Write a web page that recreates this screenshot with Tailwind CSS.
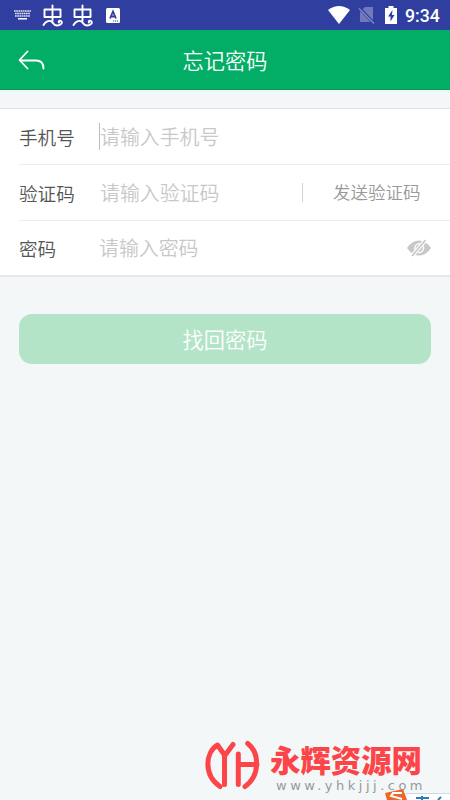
<!DOCTYPE html>
<html lang="zh-CN">
<head>
<meta charset="utf-8">
<title>忘记密码</title>
<script src="https://cdn.jsdelivr.net/npm/@tailwindcss/browser@4"></script>
</head>
<body class="bg-[#f3f7f8] font-['Noto_Sans_CJK_SC',sans-serif] font-[350]">
<div class="relative flex h-[800px] w-[450px] flex-col overflow-hidden">
  <!-- status bar -->
  <div class="flex h-[30px] shrink-0 items-center bg-[#303f9f] pl-[14px] pr-[10px] text-white">
    <svg class="h-[10px] w-[17px]" viewBox="0 0 17 10" stroke="#fff" fill="none"><path d="M0 1h17M1 3.500h15M1 6h15" stroke-width="1.4" stroke-dasharray="1.7 .5" opacity=".85"/><path d="M4 8.800h9" stroke-width="1.5"/></svg>
    <svg class="ml-[11px] h-[23px] w-[21px]" viewBox="0 0 21 23" fill="none" stroke="#fff" stroke-width="1.9" stroke-linecap="round" stroke-linejoin="round"><path d="M10.500 1.500V17M2.500 5.500h16v7.500h-16zM1.500 21C3.500 17.500 7 16 9.500 17.500C11 18.500 11.500 21.500 15 21.500C18.500 21.500 20.500 19 19.500 17.500C18.500 16 16 16.500 17 18.500"/></svg>
    <svg class="ml-[9px] h-[23px] w-[21px]" viewBox="0 0 21 23" fill="none" stroke="#fff" stroke-width="1.9" stroke-linecap="round" stroke-linejoin="round"><path d="M10.500 1.500V17M2.500 5.500h16v7.500h-16zM1.500 21C3.500 17.500 7 16 9.500 17.500C11 18.500 11.500 21.500 15 21.500C18.500 21.500 20.500 19 19.500 17.500C18.500 16 16 16.500 17 18.500"/></svg>
    <svg class="ml-[13px] h-[15px] w-[14px]" viewBox="0 0 14 15"><rect width="14" height="15" rx="1.5" fill="#fff"/><path d="M4 10.500L7 3.500l3 7M5 8.500h4" fill="none" stroke="#303f9f" stroke-width="1.8"/><path d="M7 13h1.200m.8 0h1.200m.8 0h1.200" stroke="#303f9f" stroke-width="1.200"/></svg>
    <svg class="ml-auto h-[18px] w-[22px]" viewBox="0 0 22 18"><path d="M0 4Q11-4 22 4L11 18z" fill="#fff"/></svg>
    <svg class="ml-[8px] h-[18px] w-[17px]" viewBox="0 0 17 18"><path d="M7 1h8v15H2V6z" fill="#6f79bb"/><path d="M1 1.500l15 16" stroke="#303f9f" stroke-width="3"/><path d="M1 2.500l15 15" stroke="#7f88c3" stroke-width="1.4"/></svg>
    <svg class="ml-[10px] h-[18px] w-[12px]" viewBox="0 0 12 18"><path d="M3.500 0h5v2H12v16H0V2h3.500z" fill="#fff"/><path d="M7.500 4L3 10.500h2.500V15.500L9.500 9H7z" fill="#303f9f"/></svg>
    <span class="ml-[8px] w-[35px] whitespace-nowrap pt-[2px] font-[Roboto] text-[17.700px] font-medium leading-[28px]">9:34</span>
  </div>
  <header class="relative flex h-[60px] shrink-0 items-center justify-center border-b border-[#049b56] bg-[#02ae66] text-white">
    <svg class="absolute left-[18px] top-[20px] h-[21px] w-[27px]" viewBox="0 0 27 21" fill="none" stroke="#fff" stroke-width="1.8" stroke-linecap="round" stroke-linejoin="round"><path d="M9.500 1.500L1.500 10L9.500 18.500M2 10.500h16c5 0 7.500 3 7.500 8"/></svg>
    <h1 class="text-[21.200px] font-[350] leading-[30px]">忘记密码</h1>
  </header>
  <main class="mt-[18px] flex flex-col">
    <div class="flex h-[169px] flex-col border-t border-b-2 border-t-[#dfe2e3] border-b-[#e5e7e8] bg-white text-[#555]">
      <label class="ml-[19px] flex h-[56px] items-center border-b border-[#ececec]">
        <span class="w-[80px] text-[18.600px]">手机号</span>
        <span class="h-[27px] w-px bg-[#bbb]"></span>
        <span class="text-[19.900px] text-[#c8c8c8]">请输入手机号</span>
      </label>
      <label class="ml-[19px] flex h-[56px] items-center border-b border-[#ececec]">
        <span class="w-[81px] text-[18.600px]">验证码</span>
        <span class="w-[202px] text-[19.900px] text-[#c8c8c8]">请输入验证码</span>
        <span class="h-[19px] w-px bg-[#d2d2d2]"></span>
        <span class="ml-[30px] text-[17.500px] text-[#999]">发送验证码</span>
      </label>
      <label class="ml-[19px] flex h-[54px] items-center pr-[18px]">
        <span class="w-[80px] text-[18.600px]">密码</span>
        <span class="text-[19.900px] text-[#c8c8c8]">请输入密码</span>
        <svg class="ml-auto h-[18px] w-[26px]" viewBox="0 0 26 18"><path d="M1 9Q6 1.500 13 1.500T25 9Q20 16.500 13 16.500T1 9z" fill="#c8c8c8"/><path d="M9.500 12A4.700 4.700 0 0 1 14 4.700M17 6.500A4.700 4.700 0 0 1 12 13.500" fill="none" stroke="#fff" stroke-width="1.200"/><path d="M6 17L19.500 1" stroke="#fff" stroke-width="4"/><path d="M6 17L19.500 1" stroke="#c8c8c8" stroke-width="1.700"/></svg>
      </label>
    </div>
    <button class="mx-[19px] mt-[37px] h-[50px] rounded-[13px] bg-[#b3e4c7] pb-px text-[21.200px] font-[350] text-white">找回密码</button>
  </main>
  <!-- site mark -->
  <footer class="absolute bottom-0 left-[204px] flex h-[62px] w-[246px]">
    <svg class="h-[52px] w-[57px] shrink-0" viewBox="0 0 57 52" fill="none" stroke="#fc4548" stroke-width="5" stroke-linecap="round" stroke-linejoin="round"><path d="M20.500 17L13.500 7C1.500 14-1 37 16 48.500M20.500 18L29 6.500M20.500 18v28.500M34.300 16v30.500M35 26.500h18M43.700 5.500C56 15 56 38 41 48.500"/></svg>
    <div class="ml-[9px] flex flex-col">
      <span class="mt-[3px] h-[36px] whitespace-nowrap text-[30.400px] font-black leading-[36px] text-[#fc4548]">永辉资源网</span>
      <span class="mt-[2px] h-[14px] whitespace-nowrap pl-[6px] font-['DejaVu_Sans'] text-[13px] font-normal leading-[14px] tracking-[3.500px] text-[#999]">www.yhkjjj.com</span>
    </div>
  </footer>
  <svg class="absolute bottom-0 right-0 h-[12px] w-[68px]" viewBox="0 0 68 12"><path d="M26 6h42v6H26z" fill="#fff"/><path d="M24 5.500h44" stroke="#cbdbe8"/><path d="M3 5L21 1l4 11H5z" fill="#ed672d"/><path d="M20 5H11l-2 3 11 3" fill="none" stroke="#fff" stroke-width="2"/><path d="M34 10h13M40 8v4M56 12l3-3" stroke="#287eb8" stroke-width="2"/></svg>
</div>
</body>
</html>
